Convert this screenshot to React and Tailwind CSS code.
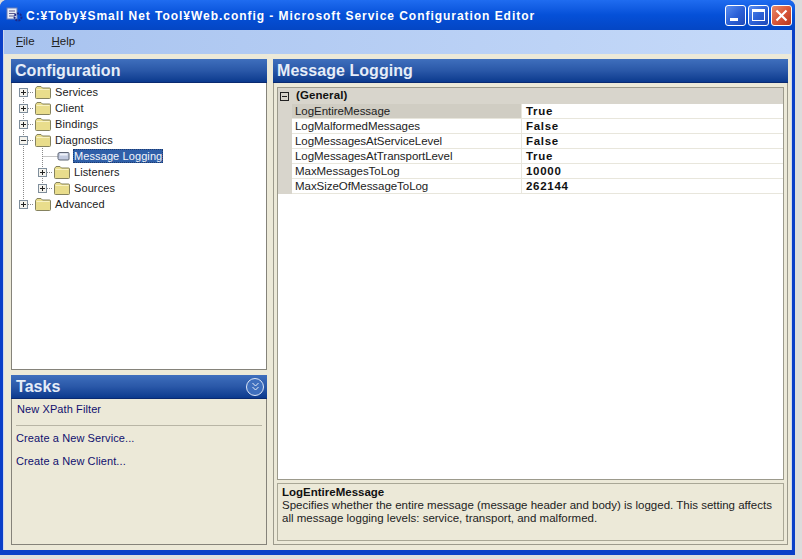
import React from "react";

const FONT = { fontFamily: '"Liberation Sans", Arial, sans-serif' };

function Expander({ open }) {
  return (
    <svg width="9" height="9" viewBox="0 0 9 9" className="block shrink-0">
      <rect x="0.5" y="0.5" width="8" height="8" fill="#f4f3ee" stroke="#7f8e9c" />
      <path d={open ? "M2 4.5H7" : "M2 4.5H7M4.5 2V7"} stroke="#222" fill="none" />
    </svg>
  );
}

function Folder() {
  return (
    <svg width="16" height="14" viewBox="0 0 16 14" className="block shrink-0">
      <path d="M0.5 3.5 L2 1.5 H6 L7.5 3 H14.5 Q15.5 3 15.5 4 V12.5 Q15.5 13.5 14.5 13.5 H1.5 Q0.5 13.5 0.5 12.5 Z" fill="#e9dd8c" stroke="#85825f" />
      <path d="M1.5 4.5 H14.5" stroke="#f8f2c4" />
    </svg>
  );
}

function LogIcon() {
  return (
    <svg width="16" height="12" viewBox="0 0 16 12" className="block shrink-0">
      <path d="M6 2.500 H14 Q15 2.500 15 3.500 V9 Q15 10 14 10 H6 Q4 10 4 8.500 V4 Q4 2.500 6 2.500 Z" fill="#c3cbe0" stroke="#5f6675" />
      <path d="M6 4.500 H13.500" stroke="#eef1f8" strokeWidth="2" />
    </svg>
  );
}

function TreeRow({ indent, open, leaf, selected, label }) {
  return (
    <div className={`h-4 flex items-center ${indent ? "pl-[26px]" : "pl-[7px]"}`}>
      <div className="w-[16px] flex justify-start">
        {leaf ? <span className="w-[9px]" /> : <Expander open={open} />}
      </div>
      {leaf ? <LogIcon /> : <Folder />}
      <span
        className={`text-[11px] leading-[14px] tracking-[0.1px] ${
          selected
            ? "ml-[3px] px-[1px] bg-[#2f5fa8] text-[#f4f6fb] outline-1 -outline-offset-1 outline-dotted outline-[#1c3a70]"
            : "ml-[2px] px-[2px] text-[#222]"
        }`}
      >
        {label}
      </span>
    </div>
  );
}

function PaneHeader({ title, children, pad = "pl-[4px]" }) {
  return (
    <div className={`h-[24px] shrink-0 flex items-center justify-between ${pad} pr-[3px] bg-gradient-to-b from-[#3f6fbd] via-[#2a58a8] to-[#0b3a8e] border-b border-[#0a2a70]`}>
      <span className="text-[16px] font-bold text-[#e6edf8] tracking-[0.05px]">{title}</span>
      {children}
    </div>
  );
}

const props = [
  ["LogEntireMessage", "True"],
  ["LogMalformedMessages", "False"],
  ["LogMessagesAtServiceLevel", "False"],
  ["LogMessagesAtTransportLevel", "True"],
  ["MaxMessagesToLog", "10000"],
  ["MaxSizeOfMessageToLog", "262144"],
];

function CaptionButton({ children, red }) {
  return (
    <div
      className={`w-[21px] h-[21px] rounded-[3px] border border-white flex items-center justify-center ${
        red
          ? "bg-gradient-to-br from-[#e68a6a] via-[#d9573a] to-[#b8371c]"
          : "bg-gradient-to-br from-[#5a8df0] via-[#2d62d8] to-[#1f49b8]"
      }`}
    >
      {children}
    </div>
  );
}

export default function App() {
  return (
    <div className="w-[802px] h-[559px] bg-[#dcdcdc] overflow-hidden" style={FONT}>
      <div className="w-[795px] h-[555px] flex flex-col bg-[#0a3fc8] rounded-t-[7px] overflow-hidden">
        {/* title bar */}
        <div className="h-[30px] shrink-0 flex items-center pl-[6px] pr-[3px] bg-gradient-to-b from-[#1f6cf0] via-[#0550d8] to-[#0446c4]">
          <svg width="17" height="16" viewBox="0 0 17 16" className="shrink-0">
            <rect x="1" y="1" width="10" height="11" fill="#e8ecf6" stroke="#6a7fb8" />
            <path d="M3 4H9M3 6.500H9M3 9H9" stroke="#5a5a90" />
            <circle cx="12" cy="10" r="3.500" fill="none" stroke="#1b2a8a" strokeWidth="2" strokeDasharray="2 1" />
          </svg>
          <span className="ml-[3px] pt-[2px] text-[12px] font-bold text-white tracking-[0.96px] whitespace-nowrap">
            C:¥Toby¥Small Net Tool¥Web.config - Microsoft Service Configuration Editor
          </span>
          <div className="ml-auto flex gap-[2px] items-center">
            <CaptionButton>
              <span className="w-[8px] h-[3px] bg-white mt-[9px] mr-[3px]" />
            </CaptionButton>
            <CaptionButton>
              <span className="w-[13px] h-[12px] border border-white border-t-[3px]" />
            </CaptionButton>
            <CaptionButton red>
              <svg width="13" height="13" viewBox="0 0 13 13">
                <path d="M1.500 1.500L11.500 11.500M11.500 1.500L1.500 11.500" stroke="white" strokeWidth="2.200" />
              </svg>
            </CaptionButton>
          </div>
        </div>

        <div className="flex-1 ml-[3px] mr-[3px] mb-[5px] flex flex-col min-h-0 bg-[#ece9d8] border-x border-[#cfd8ef]">
          {/* menu */}
          <div className="h-[24px] shrink-0 flex items-center gap-[17px] pl-[12px] bg-gradient-to-r from-[#a8c3ef] to-[#c6daf9] text-[11.500px] text-[#222]">
            <span><span className="underline">F</span>ile</span>
            <span><span className="underline">H</span>elp</span>
          </div>

          {/* body */}
          <div className="flex-1 min-h-0 flex gap-[6px] pt-[5px] pl-[7px] pb-[5px]">
            {/* left */}
            <div className="w-[256px] shrink-0 flex flex-col">
              <PaneHeader title="Configuration" />
              <div className="h-[287px] shrink-0 bg-white border border-t-0 border-[#85837a] pt-[1px]">
                <div className="relative">
                  <svg width="60" height="130" className="absolute left-0 top-0" viewBox="0 0 60 130">
                    <path
                      d="M11.500 8V120M30.500 64V104M30.500 72.500H46M16 8.500H22M16 24.500H22M16 40.500H22M16 56.500H22M16 120.500H22M35 88.500H41M35 104.500H41"
                      stroke="#8a8a8a"
                      strokeDasharray="1 1"
                      fill="none"
                    />
                  </svg>
                  <div className="relative">
                    <TreeRow label="Services" />
                    <TreeRow label="Client" />
                    <TreeRow label="Bindings" />
                    <TreeRow label="Diagnostics" open />
                    <TreeRow label="Message Logging" indent leaf selected />
                    <TreeRow label="Listeners" indent />
                    <TreeRow label="Sources" indent />
                    <TreeRow label="Advanced" />
                  </div>
                </div>
              </div>
              <div className="h-[5px] shrink-0" />
              <PaneHeader title="Tasks" pad="pl-[5px]">
                <span className="w-[18px] h-[18px] rounded-full border border-[#dfe8f8] bg-[#3f6fbd] flex items-center justify-center">
                  <svg width="9" height="9" viewBox="0 0 9 9">
                    <path d="M1.500 1L4.500 4L7.500 1M1.500 5L4.500 8L7.500 5" stroke="#e6edf8" fill="none" />
                  </svg>
                </span>
              </PaneHeader>
              <div className="flex-1 border border-t-0 border-[#85837a] text-[11px] text-[#10106e] tracking-[0.1px]">
                <div className="pl-[5px] pt-[3px] leading-[15px]">New XPath Filter</div>
                <div className="mx-[4px] mt-[8px] border-t border-[#b8b5a5]" />
                <div className="pl-[4px] mt-[5px] leading-[15px]">Create a New Service...</div>
                <div className="pl-[4px] mt-[8px] leading-[15px]">Create a New Client...</div>
              </div>
            </div>

            {/* right */}
            <div className="w-[515px] shrink-0 flex flex-col">
              <PaneHeader title="Message Logging" />
              <div className="flex-1 min-h-0 flex flex-col gap-[3px] px-[3px] pt-[4px] pb-[3px] border border-t-0 border-[#9c9a8c]">
                <div className="flex-1 min-h-0 bg-white border border-[#9c9a8c] text-[11.500px]">
                  <div className="h-[16px] bg-[#d8d5cc] flex items-center pl-[2px]">
                    <svg width="9" height="9" viewBox="0 0 9 9" className="block">
                      <rect x="0.500" y="0.500" width="8" height="8" fill="none" stroke="#222" />
                      <path d="M2 4.500H7" stroke="#222" />
                    </svg>
                    <span className="ml-[7px] font-bold text-[#111] tracking-[0.1px]">(General)</span>
                  </div>
                  {props.map(([k, v], i) => (
                    <div key={k} className="h-[15px] flex">
                      <div className="w-[14px] shrink-0 bg-[#d8d5cc]" />
                      <div
                        className={`w-[230px] shrink-0 pl-[3px] leading-[14px] text-[#222] border-b border-[#e8e6dc] border-r -tracking-[0.05px] ${
                          i === 0 ? "bg-[#d0cdc3]" : "bg-white"
                        }`}
                      >
                        {k}
                      </div>
                      <div className="flex-1 pl-[4px] leading-[14px] font-bold text-[#111] border-b border-[#e8e6dc] tracking-[0.7px]">
                        {v}
                      </div>
                    </div>
                  ))}
                </div>
                <div className="h-[58px] shrink-0 border border-[#a9a796] px-[4px] pt-[2px] text-[11.500px] leading-[13px] text-[#222]">
                  <div className="font-bold text-[#111]">LogEntireMessage</div>
                  <div>
                    Specifies whether the entire message (message header and body) is logged. This setting affects all message logging levels: service, transport, and malformed.
                  </div>
                </div>
              </div>
            </div>
          </div>
        </div>
      </div>
    </div>
  );
}
